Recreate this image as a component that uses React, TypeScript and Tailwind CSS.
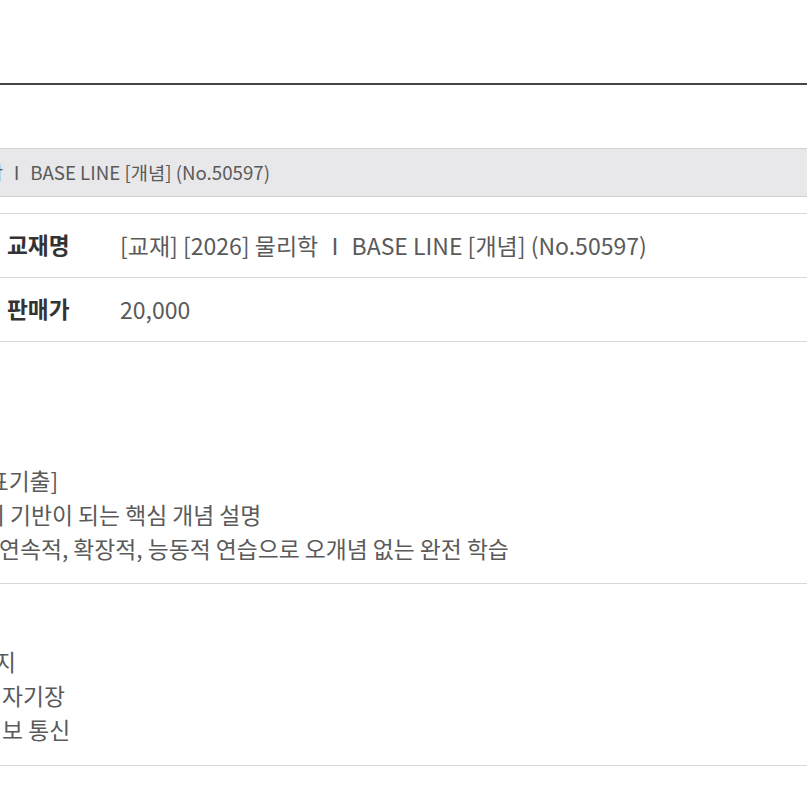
import React from 'react';

const rows = [
  { label: '교재명', value: '[교재] [2026] 물리학 Ⅰ BASE LINE [개념] (No.50597)' },
  { label: '판매가', value: '20,000' },
];

const App: React.FC = () => {
  return (
    <div className="min-h-[807px] w-full overflow-hidden bg-white font-['Noto_Sans_CJK_KR','Noto_Sans',sans-serif] text-[#5a5a5a]">
      <div className="pt-[83px]">
        <div className="h-[2px] bg-[#454545]" />

        {/* title bar */}
        <div className="mt-[63px] flex h-[49px] items-center border-y border-[#d2d2d2] bg-[#e8e8ea]">
          <span className="-ml-[158px] whitespace-nowrap text-[18.7px] text-[#5a5a5a]">
            [교재] [2026] 물리학 Ⅰ BASE LINE [개념] (No.50597)
          </span>
        </div>

        {/* info table */}
        <div className="mt-[16px] border-t border-[#d8d8d8]">
          {rows.map(row => (
            <div key={row.label} className="grid h-[64px] grid-cols-[120px_1fr] items-center border-b border-[#d8d8d8]">
              <div className="pl-[7px] text-[22.7px] font-bold text-[#333]">{row.label}</div>
              <div className="whitespace-nowrap text-[23px] text-[#5a5a5a]">{row.value}</div>
            </div>
          ))}
        </div>

        {/* description */}
        <div className="border-b border-[#d8d8d8] pt-[122px] pb-[17px] text-[22.8px] leading-[34px]">
          <div className="-ml-[41px] whitespace-nowrap">[대표기출]</div>
          <div className="-ml-[16px] whitespace-nowrap">의 기반이 되는 핵심 개념 설명</div>
          <div className="-ml-[1px] whitespace-nowrap">연속적, 확장적, 능동적 연습으로 오개념 없는 완전 학습</div>
        </div>

        {/* units */}
        <div className="border-b border-[#d8d8d8] pt-[61px] pb-[18px] text-[22.8px] leading-[34px]">
          <div className="-ml-[47px] whitespace-nowrap">에너지</div>
          <div className="-ml-[24px] whitespace-nowrap">전 자기장</div>
          <div className="-ml-[24px] whitespace-nowrap">정 보 통신</div>
        </div>
      </div>
    </div>
  );
};

export default App;
